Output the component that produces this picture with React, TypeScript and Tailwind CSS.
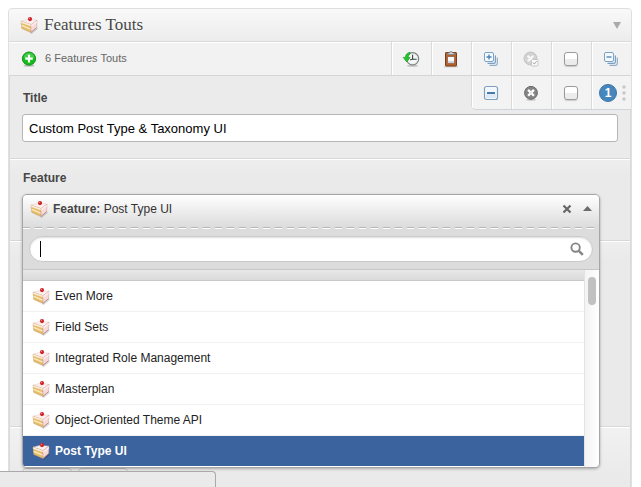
import { useState, type ReactNode } from "react";

function CakeIcon() {
  return (
    <svg width="18" height="18" viewBox="0 0 18 18" aria-hidden="true" className="shrink-0">
      <path d="M3 13.5 11 17.4 17.5 11.5V13L11.5 18Z" fill="#000" opacity=".2" />
      <path d="M1 5.2 8 3.4 17 4.2 11 8.6Z" fill="#fdf0ef" stroke="#e3cbc6" strokeWidth=".5" />
      <path d="M1 5.2 11 8.6V16.5L1.8 12.4Z" fill="#e6bd68" stroke="#c09a68" strokeWidth=".5" />
      <path d="M1 5.2 11 8.6v1.7L1.2 7Z" fill="#fbeadb" />
      <path d="M1.6 9.4 10.8 13.1" stroke="#fbe9bf" strokeWidth="1.5" />
      <path d="M11 8.6 17 4.2 16.6 11.6 11 16.5Z" fill="#f8d8d8" stroke="#c59b97" strokeWidth=".5" />
      <path d="M11.3 8.8 16.8 4.8v2L11.3 11Z" fill="#fdeceb" />
      <path d="M11 16.5 16.6 11.6" stroke="#a8807a" strokeWidth=".8" />
      <circle cx="10" cy="3.1" r="2.1" fill="#cf2428" />
      <circle cx="9.4" cy="2.4" r=".6" fill="#f08a84" />
    </svg>
  );
}

function AddIcon() {
  return (
    <svg width="16" height="16" viewBox="0 0 16 16" aria-hidden="true">
      <ellipse cx="8" cy="14.7" rx="5.5" ry="1.1" fill="#000" opacity=".2" />
      <circle cx="8" cy="7.6" r="6.6" fill="#14bd1b" stroke="#159119" />
      <path d="M2.5 6.5a5.6 5.6 0 0 1 11 0Q8 8.5 2.5 6.5Z" fill="#fff" opacity=".2" />
      <path d="M8 3.8v7.6M4.2 7.6h7.6" stroke="#fff" strokeWidth="2.2" />
    </svg>
  );
}

function HistoryIcon() {
  return (
    <svg width="18" height="18" viewBox="0 0 18 18" aria-hidden="true">
      <ellipse cx="10.5" cy="15.8" rx="5.5" ry="1" fill="#000" opacity=".2" />
      <circle cx="10.6" cy="8.8" r="6.1" fill="#f7f9f8" stroke="#7e8783" strokeWidth="1.2" />
      <circle cx="10.6" cy="8.8" r="4.7" fill="none" stroke="#b9c2bd" strokeWidth=".7" strokeDasharray=".8 1.7" />
      <path d="M10.6 4.8v4.5h4M10.6 9l-2.5 1" fill="none" stroke="#37403c" strokeWidth="1.1" />
      <path d="M8 2.3C5 2.8 3.5 4.7 3.4 7.4H1.2L4.8 12l3.3-4.6H6.3c0-1.5.5-2.8 1.7-3.6Z" fill="#20c928" stroke="#158b20" strokeWidth=".6" />
    </svg>
  );
}

function ClipboardIcon() {
  return (
    <svg width="16" height="18" viewBox="0 0 16 18" aria-hidden="true">
      <path d="M1 16.8h14" stroke="#000" opacity=".2" />
      <rect x="2.5" y="2.5" width="11" height="13.5" rx=".6" fill="#b3622b" stroke="#7c3c17" />
      <path d="M4.5 6.5h7v7h-7Z" fill="#f7f9fb" stroke="#87553a" strokeWidth=".7" />
      <path d="M5 11h6v2H5Z" fill="#cdd3da" />
      <path d="M4.5 4.6V3h2a1.5 1.5 0 0 1 3 0h2v1.6Z" fill="#cfd5da" stroke="#798089" strokeWidth=".8" />
    </svg>
  );
}

function StackIcon({ plus }: { plus?: boolean }) {
  return (
    <svg width="16" height="16" viewBox="0 0 16 16" fill="none" aria-hidden="true">
      <path d="M6.5 14.3h6.2q1.6 0 1.6-1.6V6.5" stroke="#8fadc9" strokeWidth="1.2" />
      <path d="M4.5 12.4h6.3q1.6 0 1.6-1.6V4.5" stroke="#7a9fc3" strokeWidth="1.2" />
      <rect x="1.5" y="1.5" width="9" height="9" rx="1.5" fill="#f5faff" stroke="#7ba3c8" />
      <path d={plus ? "M6 3.5v5M3.5 6h5" : "M3.5 6h5"} stroke="#4b80b2" strokeWidth="1.3" />
    </svg>
  );
}

function RemoveIcon() {
  return (
    <svg width="16" height="16" viewBox="0 0 16 16" aria-hidden="true">
      <ellipse cx="8" cy="14.8" rx="5" ry=".9" fill="#000" opacity=".2" />
      <circle cx="8" cy="7.8" r="6.4" fill="#858585" stroke="#666" />
      <path d="m5.1 4.9 5.8 5.8m0-5.8-5.8 5.8" stroke="#fff" strokeWidth="2.3" />
      <circle cx="8" cy="7.8" r="1" fill="#ddd" />
    </svg>
  );
}

function RemoveCheckedIcon() {
  return (
    <svg width="18" height="18" viewBox="0 0 18 18" aria-hidden="true">
      <circle cx="8.5" cy="8.5" r="6.5" fill="#d2d2d2" stroke="#c5c5c5" />
      <path d="m5.7 5.7 5.6 5.6m0-5.6-5.6 5.6" stroke="#f7f7f7" strokeWidth="2.2" />
      <rect x="9.5" y="9.5" width="6.5" height="6.5" rx="1" fill="#fafafa" stroke="#c6c6c6" />
      <path d="m11 12.5 1.3 1.6 2.4-3" fill="none" stroke="#a5a5a5" />
    </svg>
  );
}

function CollapseIcon() {
  return (
    <svg width="16" height="16" viewBox="0 0 16 16" aria-hidden="true">
      <rect x="1.5" y="1.5" width="13" height="13" rx="2" fill="#f3f8fc" stroke="#7e9fbd" strokeWidth="1.2" />
      <path d="M3 9h10v4H3Z" fill="#dfeaf4" />
      <path d="M4 8h8" stroke="#477aaa" strokeWidth="1.8" />
    </svg>
  );
}

function Cell({ children }: { children: ReactNode }) {
  return (
    <div className="flex w-10 items-center justify-center border-l border-[#dadada] pr-0.5 shadow-[inset_1px_0_0_#fff]">
      {children}
    </div>
  );
}

function IconButton({ label, children }: { label: string; children: ReactNode }) {
  return (
    <button type="button" aria-label={label} className="flex h-full w-full items-center justify-center">
      {children}
    </button>
  );
}

function Tick({ label }: { label: string }) {
  return (
    <input
      type="checkbox"
      aria-label={label}
      className="size-[14px] appearance-none rounded-[3px] border border-[#9a9a9a] bg-linear-to-b from-white from-50% to-[#ececec] to-50% shadow-[0_1px_1px_#ccc] checked:bg-[#5b93c8]"
    />
  );
}

const options = [
  "Even More",
  "Field Sets",
  "Integrated Role Management",
  "Masterplan",
  "Object-Oriented Theme API",
  "Post Type UI",
];

function FeatureSelect() {
  const [selected, setSelected] = useState("Post Type UI");
  return (
    <div className="absolute inset-x-3 top-[34px] z-10 mr-[18px] overflow-hidden rounded-[5px] border border-[#a6a6a6] bg-[#dcdcdc] shadow-[0_1px_3px_rgba(0,0,0,0.3)]">
      <div className="flex h-8 items-center bg-linear-to-b from-white to-[#dcdcdc] pr-[7px] pb-1 pl-[7px] text-xs text-[#333]">
        <CakeIcon />
        <span className="ml-[5px] grow">
          <strong className="text-[#464646]">Feature:</strong> {selected}
        </span>
        <button type="button" aria-label="Clear feature" className="mr-[11px]">
          <svg width="10" height="10" viewBox="0 0 10 10" aria-hidden="true">
            <path d="m1.5 1.5 7 7m0-7-7 7" stroke="#666" strokeWidth="2.2" />
          </svg>
        </button>
        <button type="button" aria-label="Close list" className="pb-[2px]">
          <svg width="9" height="5" viewBox="0 0 9 5" aria-hidden="true">
            <path d="M0 5 4.5 0 9 5Z" fill="#6b6b6b" />
          </svg>
        </button>
      </div>
      <div className="mr-[5px] h-px bg-[repeating-linear-gradient(90deg,#b5b5b5_0_7px,transparent_7px_12px)]" />
      <div className="mr-[5px] h-px bg-[repeating-linear-gradient(90deg,#fff_0_7px,transparent_7px_12px)]" />
      <div className="px-[6px] py-[7px]">
        <div className="flex h-[26px] items-center rounded-full border border-[#cacaca] bg-white pr-2 pl-[10px] shadow-[inset_0_1px_2px_#ddd]">
          <span className="h-4 w-px bg-black" />
          <input
            type="text"
            aria-label="Search features"
            autoFocus
            className="h-5 min-w-0 grow bg-transparent text-sm text-black caret-transparent outline-none"
          />
          <svg width="14" height="14" viewBox="0 0 14 14" fill="none" stroke="#858585" aria-hidden="true">
            <circle cx="5.6" cy="5.6" r="4.2" strokeWidth="1.9" />
            <path d="m8.8 8.8 4 4" strokeWidth="2.5" />
          </svg>
        </div>
      </div>
      <div className="flex border-t border-[#c6c6c6]">
        <div className="min-w-0 grow">
          <div className="h-[11px] border-b border-[#c8c8c8] bg-linear-to-b from-[#e8e8e8] to-[#dadada]" />
          <ul role="listbox" aria-label="Feature" className="bg-white pb-px">
            {options.map((name) => (
              <li key={name} role="option" aria-selected={name === selected}>
                <button
                  type="button"
                  onClick={() => setSelected(name)}
                  className={
                    name === selected
                      ? "flex h-[30px] w-full items-center gap-[5px] bg-[#3b639e] pl-[9px] text-left text-xs font-bold text-white"
                      : "flex h-[31px] w-full items-center gap-[5px] border-b border-[#f1f1f1] pl-[9px] text-left text-xs text-[#222]"
                  }
                >
                  <CakeIcon />
                  {name}
                </button>
              </li>
            ))}
          </ul>
        </div>
        <div className="w-[15px] shrink-0 border-l border-[#e3e3e3] bg-linear-to-r from-[#f3f3f3] to-white px-[3px] pt-[7px]">
          <div className="h-7 w-2 rounded-full bg-[#c1c1c1]" />
        </div>
      </div>
    </div>
  );
}

export default function App() {
  const [title, setTitle] = useState("Custom Post Type & Taxonomy UI");
  return (
    <div className="relative h-screen overflow-hidden bg-white pt-2 pr-[9px] pl-2 font-['Liberation_Sans',Arial,sans-serif] text-[#464646]">
      <main className="rounded-t-[4px] border border-[#dfdfdf] bg-[#ebebeb]">
        <header className="flex h-[33px] items-center rounded-t-[3px] border-b border-[#dadada] bg-linear-to-b from-[#f9f9f9] to-[#ececec] pr-[10px] pl-[11px]">
          <CakeIcon />
          <h1 className="ml-[6px] grow font-['Liberation_Serif',Georgia,serif] text-[17px] leading-5 [text-shadow:0_1px_0_#fff]">
            Features Touts
          </h1>
          <button type="button" aria-label="Toggle panel">
            <svg width="8" height="7" viewBox="0 0 8 7" aria-hidden="true">
              <path d="M0 0h8L4 7Z" fill="#aaa" />
            </svg>
          </button>
        </header>

        <div className="flex h-[34px] border-b border-[#d5d5d5] bg-[#f2f2f2] shadow-[inset_0_1px_0_#fff]">
          <div className="flex grow items-center gap-2 pl-3 text-[11px] text-[#666]">
            <button type="button" aria-label="Add feature tout">
              <AddIcon />
            </button>
            <span>6 Features Touts</span>
          </div>
          <Cell><IconButton label="History"><HistoryIcon /></IconButton></Cell>
          <Cell><IconButton label="Paste"><ClipboardIcon /></IconButton></Cell>
          <Cell><IconButton label="Expand all"><StackIcon plus /></IconButton></Cell>
          <Cell><IconButton label="Remove checked"><RemoveCheckedIcon /></IconButton></Cell>
          <Cell><Tick label="Check all" /></Cell>
          <Cell><IconButton label="Collapse all"><StackIcon /></IconButton></Cell>
        </div>

        <div className="relative border-x border-[#dadada]">
          <div className="absolute top-0 -right-px z-10 flex h-[34px] overflow-hidden rounded-bl-[5px] border-b border-[#cfd5da] bg-[#f3f3f3]">
            <Cell><IconButton label="Collapse"><CollapseIcon /></IconButton></Cell>
            <Cell><IconButton label="Remove"><RemoveIcon /></IconButton></Cell>
            <Cell><Tick label="Check item" /></Cell>
            <Cell>
              <span className="ml-1 flex size-[18px] shrink-0 items-center justify-center rounded-full border border-[#3b77ab] bg-[#4785bd] text-xs font-bold text-white">
                1
              </span>
              <svg width="4" height="16" viewBox="0 0 4 16" fill="#c9c9c9" aria-hidden="true" className="ml-[5px] shrink-0">
                <circle cx="2" cy="2" r="1.8" />
                <circle cx="2" cy="8" r="1.8" />
                <circle cx="2" cy="14" r="1.8" />
              </svg>
            </Cell>
          </div>

          <section className="border-b border-[#d8d8d8] px-3 pt-[14px] pb-4">
            <label htmlFor="title" className="block pl-px text-xs leading-4 font-bold">Title</label>
            <input
              id="title"
              type="text"
              value={title}
              onChange={(event) => setTitle(event.target.value)}
              className="mt-2 block h-[28px] w-full rounded-[3px] border border-[#b5b5b5] bg-white px-[6px] text-[13px] text-black outline-none"
            />
          </section>

          <section className="relative h-[82px] border-t border-b border-t-white border-b-[#d8d8d8] bg-linear-to-b from-[#eee] to-[#eaeaea] to-20% px-3 pt-[10px]">
            <h2 className="pl-px text-xs leading-4 font-bold">Feature</h2>
            <FeatureSelect />
          </section>

          <section className="h-[186px] border-t border-b border-t-white border-b-[#d8d8d8] bg-linear-to-b from-[#eee] to-[#eaeaea] to-10%" />

          <section className="flex gap-[6px] border-t border-white bg-linear-to-b from-[#f1f1f1] to-[#eaeaea] to-50% px-3 pt-[40px] pb-8">
            <button type="button" aria-label="Previous" className="h-7 w-[50px] rounded-[4px] border border-[#c8c8c8] bg-[#ececec]" />
            <button type="button" aria-label="Next" className="h-7 w-[50px] rounded-[4px] border border-[#c8c8c8] bg-[#ececec]" />
          </section>
        </div>
      </main>
      <div className="absolute bottom-0 left-0 z-20 h-4 w-[216px] rounded-tr-[4px] border-t border-r border-[#a9a9a9] bg-[#eaeaea]" />
    </div>
  );
}
